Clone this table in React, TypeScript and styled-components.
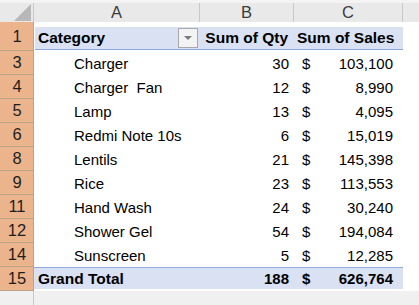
import React from "react";
import styled, { createGlobalStyle, css } from "styled-components";

type Variant = "head" | "item" | "total";

const COL_WIDTHS = { num: 34, a: 166, b: 94, c: 109 };

const items = [
  { n: 3, name: "Charger", qty: 30, sales: "103,100" },
  { n: 4, name: "Charger  Fan", qty: 12, sales: "8,990" },
  { n: 5, name: "Lamp", qty: 13, sales: "4,095" },
  { n: 6, name: "Redmi Note 10s", qty: 6, sales: "15,019" },
  { n: 8, name: "Lentils", qty: 21, sales: "145,398" },
  { n: 9, name: "Rice", qty: 23, sales: "113,553" },
  { n: 11, name: "Hand Wash", qty: 24, sales: "30,240" },
  { n: 12, name: "Shower Gel", qty: 54, sales: "194,084" },
  { n: 14, name: "Sunscreen", qty: 5, sales: "12,285" },
];

const App = () => {
  return (
    <>
      <GlobalStyle />
      <Sheet>
        <ColHeaderRow>
          <Corner>
            <CornerTriangle />
          </Corner>
          <ColLetter $w={COL_WIDTHS.a}>A</ColLetter>
          <ColLetter $w={COL_WIDTHS.b}>B</ColLetter>
          <ColLetter $w={COL_WIDTHS.c}>C</ColLetter>
          <ColLetterFill />
        </ColHeaderRow>

        <Row $h={29}>
          <RowNum>1</RowNum>
          <HeadBand>
            <HeadCell $w={COL_WIDTHS.a - 1}>
              Category
              <FilterButton>
                <FilterArrow />
              </FilterButton>
            </HeadCell>
            <HeadCell $w={COL_WIDTHS.b} $right>
              Sum of Qty
            </HeadCell>
            <HeadCell $w={COL_WIDTHS.c}>Sum of Sales</HeadCell>
          </HeadBand>
        </Row>

        {items.map((it) => (
          <Row key={it.n} $h={24}>
            <RowNum>{it.n}</RowNum>
            <NameCell $variant="item">{it.name}</NameCell>
            <QtyCell>{it.qty}</QtyCell>
            <SalesCell>
              <span>$</span>
              <span>{it.sales}</span>
            </SalesCell>
          </Row>
        ))}

        <Row $h={24}>
          <RowNum>15</RowNum>
          <TotalBand>
            <NameCell $variant="total">Grand Total</NameCell>
            <QtyCell $bold>188</QtyCell>
            <SalesCell $bold>
              <span>$</span>
              <span>626,764</span>
            </SalesCell>
          </TotalBand>
        </Row>

        <Below>
          <BelowNum />
        </Below>
      </Sheet>
    </>
  );
};

const GlobalStyle = createGlobalStyle`
  html, body {
    margin: 0;
    padding: 0;
    background: #ffffff;
    overflow: hidden;
  }
  body {
    font-family: "Liberation Sans", Arial, sans-serif;
  }
`;

const Sheet = styled.div`
  width: 419px;
  height: 305px;
  display: flex;
  flex-direction: column;
  background: #ffffff;
  color: #000000;
  font-size: 15px;
`;

const ColHeaderRow = styled.div`
  display: flex;
  height: 22px;
  flex: none;
  background: #e9e9e9;
  border-top: 3px solid #f3f3f3;
  box-sizing: border-box;
`;

const Corner = styled.div`
  width: ${COL_WIDTHS.num}px;
  flex: none;
  position: relative;
  border-right: 1px solid #c8c8c8;
  box-sizing: border-box;
`;

const CornerTriangle = styled.div`
  position: absolute;
  right: 2px;
  bottom: 1px;
  width: 0;
  height: 0;
  border-left: 17px solid transparent;
  border-bottom: 17px solid #b8b8b8;
`;

const ColLetter = styled.div<{ $w: number }>`
  width: ${(p) => p.$w}px;
  flex: none;
  display: flex;
  align-items: center;
  justify-content: center;
  font-size: 16.5px;
  color: #3c3c3c;
  border-right: 1px solid #c8c8c8;
  box-sizing: border-box;
`;

const ColLetterFill = styled.div`
  flex: 1;
`;

const Row = styled.div<{ $h: number }>`
  display: flex;
  height: ${(p) => p.$h}px;
  flex: none;
`;

const RowNum = styled.div`
  width: ${COL_WIDTHS.num}px;
  flex: none;
  display: flex;
  align-items: center;
  justify-content: center;
  padding-left: 1px;
  background: #ebb48d;
  color: #1e1e1e;
  font-size: 16.5px;
  border-right: 1px solid #b3a58e;
  border-bottom: 1px solid #b9a487;
  box-sizing: border-box;
`;

const HeadBand = styled.div`
  display: flex;
  align-self: flex-start;
  margin-top: 5px;
  margin-left: 1px;
  height: 23px;
  background: #d9e1f2;
  border-bottom: 1px solid #8eaadb;
  box-sizing: border-box;
`;

const HeadCell = styled.div<{ $w: number; $right?: boolean }>`
  width: ${(p) => p.$w}px;
  flex: none;
  display: flex;
  align-items: center;
  justify-content: ${(p) => (p.$right ? "flex-end" : "flex-start")};
  padding: ${(p) => (p.$right ? "0 6px 0 0" : "0 0 0 3px")};
  font-size: 15.5px;
  font-weight: bold;
  white-space: nowrap;
  box-sizing: border-box;
`;

const FilterButton = styled.div`
  margin-left: auto;
  margin-right: 2px;
  width: 20px;
  height: 20px;
  display: flex;
  align-items: center;
  justify-content: center;
  background: #f3f3f3;
  border: 1px solid #a9a9a9;
  box-sizing: border-box;
`;

const FilterArrow = styled.div`
  width: 0;
  height: 0;
  border-left: 4px solid transparent;
  border-right: 4px solid transparent;
  border-top: 4px solid #7a7a7a;
`;

const TotalBand = styled.div`
  display: flex;
  height: 22px;
  background: #d9e1f2;
  border-top: 1px solid #8eaadb;
  box-sizing: border-box;
`;

const NameCell = styled.div<{ $variant: Variant }>`
  width: ${COL_WIDTHS.a}px;
  flex: none;
  display: flex;
  align-items: center;
  white-space: pre;
  box-sizing: border-box;
  ${(p) =>
    p.$variant === "item"
      ? css`
          padding-left: 40px;
        `
      : css`
          width: ${COL_WIDTHS.a - 1}px;
          margin-left: 1px;
          padding-left: 3px;
          font-size: 15.5px;
          font-weight: bold;
        `}
`;

const QtyCell = styled.div<{ $bold?: boolean }>`
  width: ${COL_WIDTHS.b}px;
  flex: none;
  display: flex;
  align-items: center;
  justify-content: flex-end;
  padding-right: 5px;
  font-weight: ${(p) => (p.$bold ? "bold" : "normal")};
  box-sizing: border-box;
`;

const SalesCell = styled.div<{ $bold?: boolean }>`
  width: ${COL_WIDTHS.c}px;
  flex: none;
  display: flex;
  align-items: center;
  justify-content: space-between;
  padding: 0 10px 0 8px;
  font-weight: ${(p) => (p.$bold ? "bold" : "normal")};
  box-sizing: border-box;
`;

const Below = styled.div`
  flex: 1;
  display: flex;
  background: #f0f0f0;
`;

const BelowNum = styled.div`
  width: ${COL_WIDTHS.num}px;
  border-right: 1px solid #c8c8c8;
  box-sizing: border-box;
`;

export default App;
